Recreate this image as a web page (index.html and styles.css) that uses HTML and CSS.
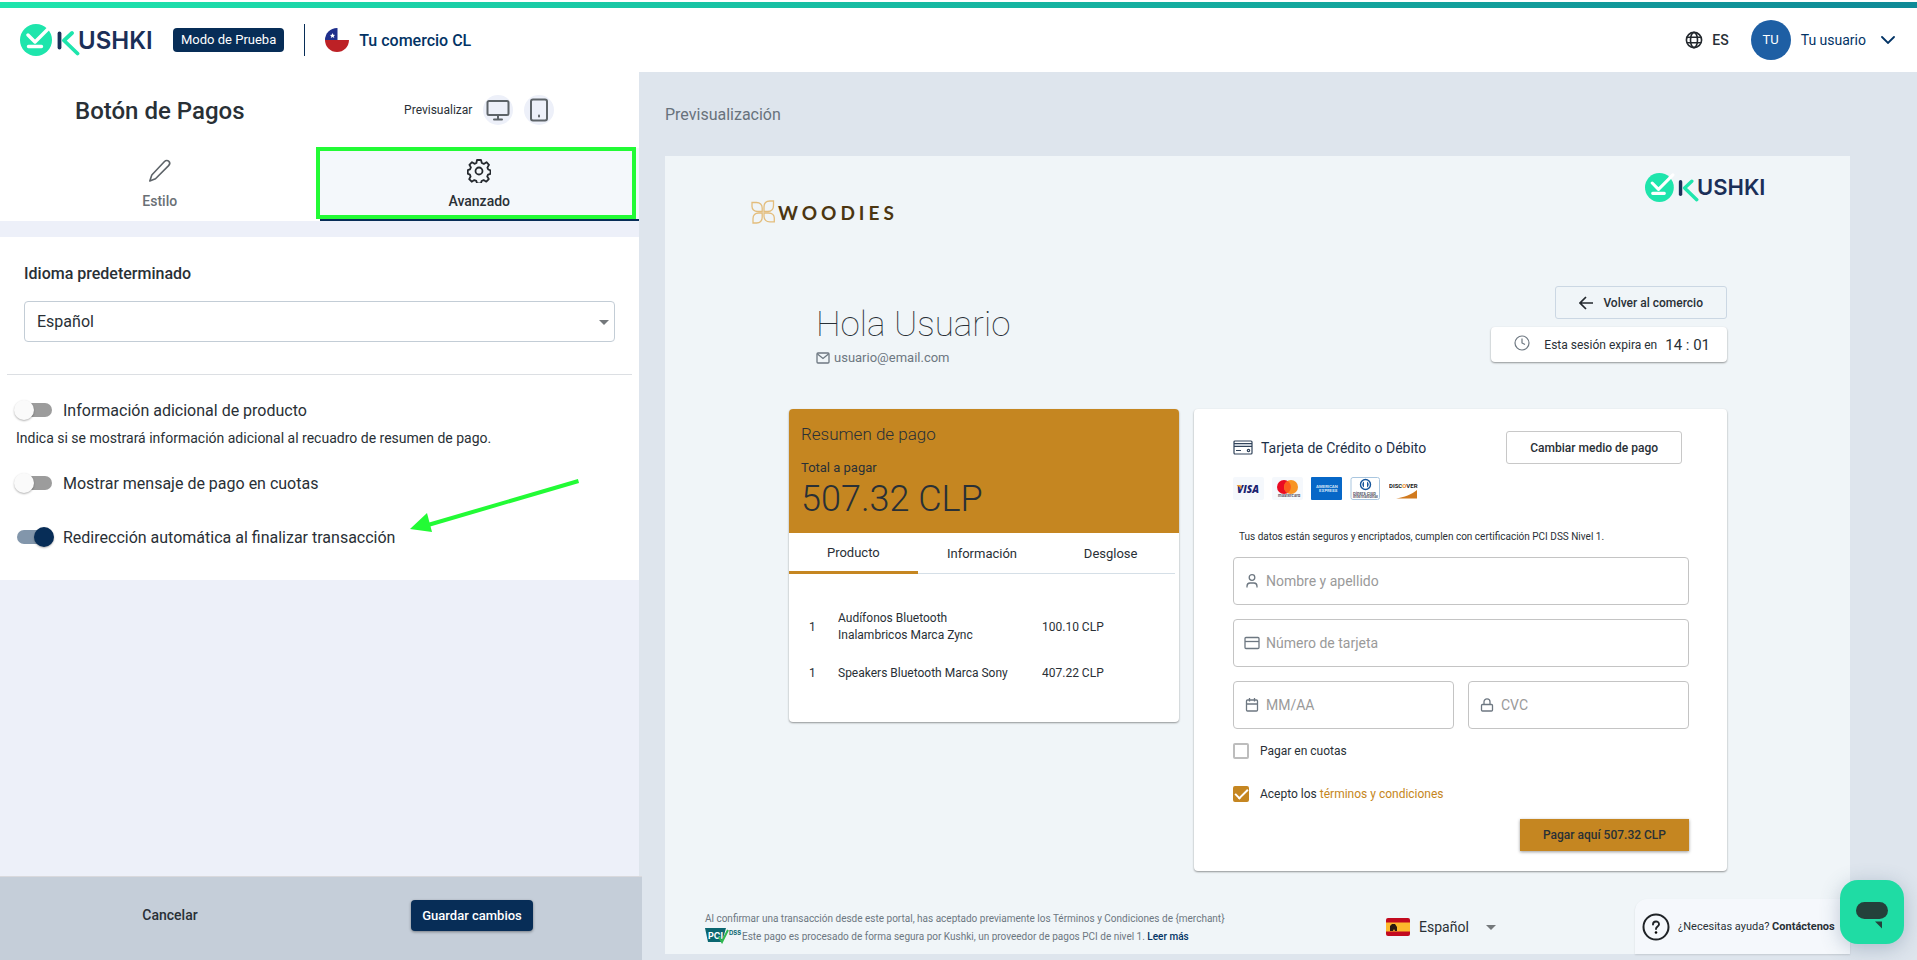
FILE: index.html
```html
<!DOCTYPE html>
<html lang="es">
<head>
<meta charset="utf-8">
<title>Botón de Pagos</title>
<link rel="stylesheet" href="styles.css">
</head>
<body>
<div class="app">
  <header class="topbar">
    <div class="brand">
      <div class="logo">
        <svg viewBox="0 0 60 32" aria-hidden="true"><circle cx="16" cy="16" r="16" fill="#1ee5ac"/><path d="M8 11l7 7L31 2M8.500 22.500h13" fill="none" stroke="#fff" stroke-width="3.400" stroke-linecap="round" stroke-linejoin="round"/><path d="M39.500 9.500v14" stroke="#1b2f58" stroke-width="3.800" stroke-linecap="round"/><path d="M52 9l-8 7.500 13.500 13" fill="none" stroke="#1ee5ac" stroke-width="3.800" stroke-linecap="round" stroke-linejoin="round"/></svg>
        <span>USHKI</span>
      </div>
      <span class="badge">Modo de Prueba</span>
      <span class="divider"></span>
      <svg class="flag-cl" viewBox="0 0 24 24" aria-hidden="true">
        <clipPath id="round"><circle cx="12" cy="12" r="12"/></clipPath>
        <g clip-path="url(#round)"><path fill="#fff" d="M0 0h24v24H0z"/><path fill="#bd2126" d="M0 12h24v12H0z"/><path fill="#1f2f8c" d="M0 0h12.500v12H0z"/><path fill="#fff" d="M7.500 5l.8 1.800 1.900.1-1.500 1.200.6 1.900-1.800-1-1.700 1 .5-1.900-1.500-1.200 2-.1z"/></g>
      </svg>
      <span class="merchant">Tu comercio CL</span>
    </div>
    <div class="account">
      <button class="lang" type="button">
        <svg viewBox="0 0 18 18" class="ic18" aria-hidden="true"><g fill="none" stroke="#23282d" stroke-width="1.600"><circle cx="9" cy="9" r="7.600"/><ellipse cx="9" cy="9" rx="3.500" ry="7.600"/><path d="M2 6.300h14M2 11.700h14"/></g></svg>
        ES
      </button>
      <button class="user" type="button">
        <span class="avatar">TU</span>
        Tu usuario
        <svg viewBox="0 0 14 8" class="chev" aria-hidden="true"><path d="M1 1l6 6 6-6" fill="none" stroke="#023365" stroke-width="1.800" stroke-linecap="round"/></svg>
      </button>
    </div>
  </header>

  <div class="body">
    <aside class="sidebar">
      <div class="side-head">
        <div class="side-title">
          <h1>Botón de Pagos</h1>
          <div class="devices">
            <span>Previsualizar</span>
            <button type="button" class="round" aria-label="Escritorio"><svg viewBox="0 0 24 24" class="ic24"><path d="M3 3h18a1.500 1.500 0 0 1 1.500 1.500v11A1.500 1.500 0 0 1 21 17H3a1.500 1.500 0 0 1-1.500-1.500v-11A1.500 1.500 0 0 1 3 3zM12 17v4M8 21.500h8"/></svg></button>
            <button type="button" class="round" aria-label="Tableta"><svg viewBox="0 0 24 24" class="ic24"><rect x="4" y="1.500" width="16" height="21" rx="2"/><path d="M12 17.500v1"/></svg></button>
          </div>
        </div>
        <nav class="tabs">
          <button type="button" class="tab">
            <svg viewBox="0 0 24 24" class="ic24 thin"><path d="M16.500 2.500c1.300-1.300 3.200-1.300 4.300-.2s1.100 3-.2 4.300L7.500 19.800 1.800 22l2-6z"/></svg>
            Estilo
          </button>
          <button type="button" class="tab active">
            <svg viewBox="0 0 24 24" class="ic24"><circle cx="12" cy="12" r="3.500"/><path d="M10 1h4l.8 3 2 .9 2.700-1.700 2.500 2.600-1.600 2.800.8 1.900 2.300.8v3.500l-2.500.8-.8 2 1.600 2.500-2.500 2.600-2.700-1.600-2 .9-.7 2.500h-3.800l-.8-2.600-2-.8-2.600 1.600-2.500-2.600 1.400-2.600-.7-1.900L.8 14.700v-3.500L3 10.400l.9-2-1.500-2.600L5 3.200l2.500 1.600 1.900-.8z"/></svg>
            Avanzado
          </button>
          <span class="highlight"></span>
        </nav>
      </div>
      <form class="settings">
        <div class="language">
          <label for="idioma">Idioma predeterminado</label>
          <div class="select-box">
            <select id="idioma"><option>Español</option></select>
            <span class="caret"></span>
          </div>
        </div>
        <div class="switches">
          <label class="switch-row"><input type="checkbox" class="switch"><span>Información adicional de producto</span></label>
          <p class="hint">Indica si se mostrará información adicional al recuadro de resumen de pago.</p>
          <label class="switch-row"><input type="checkbox" class="switch"><span>Mostrar mensaje de pago en cuotas</span></label>
          <label class="switch-row last"><input type="checkbox" class="switch" checked><span>Redirección automática al finalizar transacción</span></label>
          <svg class="arrow" viewBox="0 0 170 56" aria-hidden="true"><path d="M168.500 2L18 46" stroke="#22fb35" stroke-width="4"/><path d="M0 50l17-16 5 19z" fill="#22fb35"/></svg>
        </div>
      </form>
      <footer class="actions">
        <button type="button" class="cancel">Cancelar</button>
        <button type="button" class="save">Guardar cambios</button>
      </footer>
    </aside>

    <main class="preview">
      <h2>Previsualización</h2>
      <section class="page">
        <div class="page-brand">
          <div class="woodies">
            <svg viewBox="0 0 24 24" class="ic24" aria-hidden="true"><g fill="none" stroke="#e3bd7c" stroke-width="1.300"><path d="M1 2.500h4.500c3.500 0 5.700 2 5.700 5.500v3.500H6.700C3 11.500 1 9 1 6.500z"/><path d="M22.500 1h-3.500c-3.800 0-6 2-6 6v4.500h3.700c3.500 0 5.800-2 5.800-6z"/><path d="M2 23h3.500c3.500 0 5.700-2 5.700-5.700V13H7.700C4 13 2 15 2 18.700z"/><path d="M23.300 21.800h-4.500c-3.500 0-5.800-2-5.800-5.500V13h4.500c3.800 0 5.800 2.500 5.800 5z"/></g></svg>
            <span>WOODIES</span>
          </div>
          <div class="logo small">
            <svg viewBox="0 0 60 32" aria-hidden="true"><circle cx="16" cy="16" r="16" fill="#1ee5ac"/><path d="M8 11l7 7L31 2M8.500 22.500h13" fill="none" stroke="#fff" stroke-width="3.400" stroke-linecap="round" stroke-linejoin="round"/><path d="M39.500 9.500v14" stroke="#1b2f58" stroke-width="3.800" stroke-linecap="round"/><path d="M52 9l-8 7.500 13.500 13" fill="none" stroke="#1ee5ac" stroke-width="3.800" stroke-linecap="round" stroke-linejoin="round"/></svg>
            <span>USHKI</span>
          </div>
        </div>

        <div class="welcome">
          <div class="hello">
            <h3>Hola Usuario</h3>
            <p><svg viewBox="0 0 14 12" class="mail" aria-hidden="true"><g fill="none" stroke="#6d7781" stroke-width="1.300"><rect x="1" y="1" width="12" height="10" rx="1"/><path d="M1.500 2L7 6.500 12.500 2"/></g></svg>usuario@email.com</p>
          </div>
          <div class="session">
            <button type="button" class="back"><svg viewBox="0 0 14 14" class="ic14" aria-hidden="true"><path d="M14 7H1M7 1L1 7l6 6" fill="none" stroke="#23282d" stroke-width="1.700"/></svg>Volver al comercio</button>
            <div class="timer">
              <svg viewBox="0 0 16 16" class="ic16" aria-hidden="true"><g fill="none" stroke="#6d7781" stroke-width="1.200"><circle cx="8" cy="8" r="7"/><path d="M8 3.500V8l3 1.500"/></g></svg>
              <span>Esta sesión expira en</span><strong>14 : 01</strong>
            </div>
          </div>
        </div>

        <div class="cards">
          <section class="card summary">
            <div class="summary-head">
              <h4>Resumen de pago</h4>
              <p>Total a pagar</p>
              <strong>507.32 CLP</strong>
            </div>
            <nav class="summary-tabs">
              <button type="button" class="active">Producto</button>
              <button type="button">Información</button>
              <button type="button">Desglose</button>
            </nav>
            <table>
              <tr><td>1</td><td>Audífonos Bluetooth<br>Inalambricos Marca Zync</td><td>100.10 CLP</td></tr>
              <tr><td>1</td><td>Speakers Bluetooth Marca Sony</td><td>407.22 CLP</td></tr>
            </table>
          </section>

          <form class="card payment">
            <div class="method">
              <span class="method-name"><svg viewBox="0 0 20 16" class="cardic" aria-hidden="true"><path d="M1 4h18v2H1z" fill="#c5cdd6"/><g fill="none" stroke="#31435a" stroke-width="1.200"><rect x="1" y="1" width="18" height="13" rx="1"/><path d="M1 3.500h18M1 6.500h18M3 10.500h5"/><circle cx="15.500" cy="10.500" r="1.200"/></g></svg>Tarjeta de Crédito o Débito</span>
              <button type="button" class="change">Cambiar medio de pago</button>
            </div>
            <div class="networks">
              <svg viewBox="0 0 31 23" role="img" aria-label="Visa"><rect width="31" height="23" rx="2" fill="#f5f8fc"/><text x="4" y="16" class="visa">VISA</text><path d="M3.500 8h4l1.500 4z" fill="#f0a02c"/></svg>
              <svg viewBox="0 0 31 23" role="img" aria-label="Mastercard"><rect width="31" height="23" rx="2" fill="#f5f8fc"/><circle cx="12" cy="10" r="7" fill="#ea0a22"/><circle cx="19" cy="10" r="7" fill="#f79425"/><path d="M15.500 4a7 7 0 0 1 0 12 7 7 0 0 1 0-12z" fill="#fc5c1c"/><text x="6" y="20" class="tiny">mastercard</text></svg>
              <svg viewBox="0 0 31 23" role="img" aria-label="American Express"><rect width="31" height="23" rx="1" fill="#0667c7"/><text x="5" y="10.500" class="tiny white">AMERICAN</text><text x="8" y="15" class="tiny white">EXPRESS</text></svg>
              <svg viewBox="0 0 31 23" role="img" aria-label="Diners Club"><rect x="1" y=".5" width="28.500" height="22" rx="2" fill="#fff" stroke="#a9c6df"/><circle cx="15.500" cy="7.500" r="5" fill="#fff" stroke="#15559b" stroke-width="1.400"/><path d="M14 4.500a3.500 3.500 0 0 0 0 6zM17 4.500a3.500 3.500 0 0 1 0 6z" fill="#15559b"/><text x="3" y="17.500" class="tiny">Diners Club</text><text x="3" y="21" class="tiny">International</text></svg>
              <svg viewBox="0 0 31 23" role="img" aria-label="Discover"><text x="0" y="11" class="disc">DISC<tspan fill="#ef8a1e">O</tspan>VER</text><path d="M7 21.500C15 20.500 23 17 28 13v8.500z" fill="#d17a1e"/></svg>
            </div>
            <p class="secure">Tus datos están seguros y encriptados, cumplen con certificación PCI DSS Nivel 1.</p>
            <div class="fields">
              <label class="field wide"><svg viewBox="0 0 16 16" class="ic16"><circle cx="8" cy="4.500" r="2.800"/><path d="M3 14.500v-1.300C3 11 4.500 10 6 10h4c1.500 0 3 1 3 3.200v1.300"/></svg><input type="text" placeholder="Nombre y apellido" aria-label="Nombre y apellido"></label>
              <label class="field wide"><svg viewBox="0 0 16 16" class="ic16"><rect x="1" y="2.500" width="14" height="11" rx="1"/><path d="M1 6.500h14"/></svg><input type="text" placeholder="Número de tarjeta" aria-label="Número de tarjeta"></label>
              <label class="field"><svg viewBox="0 0 16 16" class="ic16"><rect x="2.500" y="3" width="11" height="11" rx="1"/><path d="M2.500 7h11M5.500 1v3.500M10.500 1v3.500"/></svg><input type="text" placeholder="MM/AA" aria-label="MM/AA"></label>
              <label class="field"><svg viewBox="0 0 16 16" class="ic16"><rect x="2.500" y="7.500" width="11" height="6.500" rx="1"/><path d="M5 7.500V4.800a3 3 0 0 1 6 0v2.700"/></svg><input type="text" placeholder="CVC" aria-label="CVC"></label>
            </div>
            <label class="check"><input type="checkbox"><span>Pagar en cuotas</span></label>
            <div class="check second"><input type="checkbox" id="terms" checked><label for="terms">Acepto los</label><a href="#">términos y condiciones</a></div>
            <button type="button" class="pay">Pagar aquí 507.32 CLP</button>
          </form>
        </div>

        <footer class="page-foot">
          <div class="legal">
            <p>Al confirmar una transacción desde este portal, has aceptado previamente los Términos y Condiciones de {merchant}</p>
            <p><svg viewBox="0 0 37 16" class="pci" role="img" aria-label="PCI DSS"><path d="M0 0h21l-4 14H3z" fill="#0b6670"/><text x="3" y="11" class="pci-text" fill="#fff">PCI</text><path d="M14 9l3 5 6-12" fill="none" stroke="#2fb84f" stroke-width="2"/><text x="24" y="7" class="dss-text" fill="#0b6670">DSS</text></svg>Este pago es procesado de forma segura por Kushki, un proveedor de pagos PCI de nivel 1. <a href="#">Leer más</a></p>
          </div>
          <div class="page-lang">
            <svg viewBox="0 0 24 18" class="flag-es" aria-hidden="true"><rect width="24" height="18" rx="2" fill="#c20a1f"/><path d="M0 4.500h24v9H0z" fill="#fdb92c"/><path d="M4 13V8l2-2h3l2 3v4H9l-1-2-1 2z" fill="#2b1a10"/></svg>
            <div class="select-box">
              <select aria-label="Idioma"><option>Español</option></select>
              <span class="caret"></span>
            </div>
          </div>
          <div class="help">
            <svg viewBox="0 0 28 28" class="q" aria-hidden="true"><circle cx="14" cy="14" r="12.500" fill="none" stroke="#1f2327" stroke-width="2"/><path d="M11 11.500c0-4 6-4 6-.3 0 2.300-3 2.300-3 4.800" fill="none" stroke="#1f2327" stroke-width="1.900" stroke-linecap="round"/><circle cx="14" cy="19.500" r="1.300"/></svg>
            <span>¿Necesitas ayuda? <b>Contáctenos</b></span>
          </div>
        </footer>
      </section>
    </main>
  </div>
  <button type="button" class="chat" aria-label="Chat"><svg viewBox="0 0 64 64"><rect x="16" y="22" width="32" height="17" rx="8.500" fill="#24413b"/><path d="M35 41.500h7v7z" fill="#24413b"/></svg></button>
</div>
</body>
</html>
```

FILE: styles.css
```css
* { box-sizing: border-box; }

body {
  margin: 0;
  font-family: Roboto, "Noto Sans", sans-serif;
  font-size: 14px;
  color: #293036;
  background: #dee5ed;
}

h1, h2, h3, h4, p { margin: 0; font-weight: 400; }
a { text-decoration: none; }
svg { display: block; flex: none; }
button, select, input { font: inherit; color: inherit; margin: 0; }
button { padding: 0; border: 0; background: none; cursor: pointer; }
.ic24 { width: 24px; height: 24px; }
.ic18 { width: 18px; height: 18px; }
.ic16 { width: 16px; height: 16px; }
.ic14 { width: 14px; height: 14px; }

.app { min-height: 100vh; display: flex; flex-direction: column; position: relative; }

/* Logo */
.logo { display: flex; align-items: center; width: 134px; height: 32px; }
.logo svg { width: 60px; height: 32px; }
.logo span {
  margin-left: -2px;
  font-family: Inter, sans-serif;
  font-size: 24px;
  font-weight: 600;
  color: #1b2f58;
}
.logo.small { width: 120px; height: 30px; }
.logo.small svg { width: 54px; height: 29px; }
.logo.small span { font-size: 22px; }

/* Top bar */
.topbar {
  display: flex;
  justify-content: space-between;
  align-items: center;
  height: 72px;
  padding: 8px 22px 0 20px;
  background: linear-gradient(90deg, #1ee5ac, #0f8a97) 0 2px / 100% 6px no-repeat, #fff;
}
.brand, .account, .lang, .user { display: flex; align-items: center; }
.badge {
  margin-left: 19px;
  padding: 0 8px;
  font-size: 13px;
  line-height: 24px;
  border-radius: 4px;
  color: #fff;
  background: #072d57;
}
.divider { width: 1px; height: 32px; margin: 0 20px; background: #072d57; }
.flag-cl { width: 24px; height: 24px; }
.merchant { margin-left: 10px; font-size: 16px; font-weight: 500; color: #023365; }
.account { gap: 22px; }
.lang { gap: 9px; font-weight: 500; }
.user { gap: 10px; color: #023365; }
.avatar {
  width: 40px;
  line-height: 40px;
  font-size: 13px;
  text-align: center;
  border-radius: 50%;
  color: #fff;
  background: #1e5fa4;
}
.chev { width: 14px; height: 8px; margin-left: 5px; }

.body { flex: 1; display: grid; grid-template-columns: 1fr 2fr; }

/* Sidebar */
.sidebar { display: flex; flex-direction: column; background: #edf0f9; }
.side-head { background: #fff; }
.side-title, .tabs, .actions { display: grid; grid-template-columns: 1fr 1fr; }
.side-title { height: 76px; align-items: center; justify-items: center; }
.side-title h1 { padding-top: 2px; font-size: 24px; font-weight: 500; }
.devices { display: flex; align-items: center; gap: 11px; font-size: 12px; }
.round {
  display: grid;
  place-items: center;
  width: 30px;
  height: 30px;
  border-radius: 50%;
  background: #edf0f9;
}
.round .ic24, .tab .ic24 { fill: none; stroke: #5d6368; stroke-width: 2; stroke-linejoin: round; stroke-linecap: round; }
.tabs { position: relative; }
.tab {
  display: flex;
  flex-direction: column;
  align-items: center;
  gap: 10px;
  height: 73px;
  padding-top: 11px;
  font-weight: 500;
  color: #6a7075;
}
.tab .ic24.thin { stroke-width: 1.6; }
.tab.active { color: #293036; background: #f4f8fb; border-bottom: 2px solid #072d57; }
.tab.active .ic24 { stroke: #23282d; stroke-width: 1.8; }
.highlight { position: absolute; top: -1px; bottom: 2px; left: 50%; right: 3px; margin-left: -4px; border: 4px solid #22fb35; }

.settings { margin-top: 16px; background: #fff; }
.language {
  display: flex;
  flex-direction: column;
  gap: 17px;
  margin: 0 7px;
  padding: 27px 17px 32px;
  border-bottom: 1px solid #dcdfe3;
}
.language label { font-size: 16px; font-weight: 500; line-height: 20px; }
.select-box { position: relative; }
.select-box select {
  appearance: none;
  width: 100%;
  border: 1px solid #c3cdd6;
  border-radius: 4px;
  background: transparent;
}
.language select { height: 41px; padding: 0 12px; font-size: 16px; }
.caret {
  position: absolute;
  top: 50%;
  right: 6px;
  margin-top: -2px;
  border: 5px solid transparent;
  border-top-color: #74787b;
  border-bottom: 0;
  pointer-events: none;
}

.switches { position: relative; padding: 23px 16px 31px; }
.switch-row { display: flex; align-items: center; gap: 11px; height: 24px; padding-left: 1px; font-size: 16px; }
.switch {
  appearance: none;
  display: flex;
  align-items: center;
  width: 35px;
  height: 14px;
  border-radius: 7px;
  background: #9c9c9c;
}
.switch::before {
  content: "";
  width: 20px;
  height: 20px;
  margin-left: -3px;
  border-radius: 50%;
  background: #fafafa;
  box-shadow: 0 1px 2px rgba(0, 0, 0, .3);
}
.switch:checked { background: #8296ab; justify-content: flex-end; }
.switch:checked::before { margin-right: -2px; background: #072d57; }
.hint { margin: 6px 0 23px; line-height: 20px; }
.last { margin-top: 30px; }
.arrow { position: absolute; left: 410px; top: 104px; width: 170px; height: 56px; }

.actions {
  align-items: center;
  justify-items: center;
  height: 84px;
  margin: auto -3px 0 0;
  padding: 0 19px 7px;
  border-top: 1px solid #d9d9dd;
  background: #c5ced9;
}
.cancel { font-weight: 500; padding: 8px; }
.save {
  height: 31px;
  padding: 0 11px;
  font-size: 13px;
  font-weight: 500;
  border-radius: 4px;
  color: #fff;
  background: #072d57;
  box-shadow: 0 1px 3px rgba(0, 0, 0, .4);
}

/* Preview */
.preview { display: flex; flex-direction: column; padding: 0 67px 6px 26px; }
.preview h2 { height: 84px; font-size: 16px; line-height: 86px; color: #68727c; }
.page { flex: 1; display: flex; flex-direction: column; background: #f0f5f8; }
.page-brand { display: flex; justify-content: space-between; padding: 16px 85px 0 86px; }
.woodies { display: flex; align-items: center; gap: 3px; margin-top: 28px; height: 24px; }
.woodies span { font: 700 19px Lato, sans-serif; letter-spacing: 4px; color: #4c3611; }
.welcome { display: flex; justify-content: space-between; padding: 62px 123px 0 151px; }
.hello { padding-top: 17px; }
.hello h3 { font-size: 35px; font-weight: 100; line-height: 44px; }
.hello p { display: flex; align-items: center; gap: 4px; margin-top: 1px; font-size: 13px; line-height: 20px; color: #6d7781; }
.mail { width: 14px; height: 12px; }
.session { display: flex; flex-direction: column; align-items: flex-end; gap: 8px; }
.back, .change {
  display: flex;
  align-items: center;
  gap: 10px;
  height: 33px;
  padding: 0 23px;
  font-size: 12px;
  font-weight: 500;
  border: 1px solid #cbd7e3;
  border-radius: 3px;
}
.card, .timer { background: #fff; border-radius: 4px; box-shadow: 0 1px 2px rgba(0, 0, 0, .4); }
.timer { display: flex; align-items: center; height: 35px; padding: 0 17px 0 23px; font-size: 12px; }
.timer svg { margin: 0 14px 4px 0; }
.timer strong { margin-left: 8px; font-size: 15px; font-weight: 400; }

.cards {
  display: grid;
  grid-template-columns: minmax(0, 390fr) minmax(0, 533fr);
  gap: 15px;
  align-items: start;
  margin-top: 41px;
  padding: 0 123px 0 124px;
}
.summary { min-height: 313px; overflow: hidden; }
.summary-head { height: 124px; padding: 14px 12px; background: #c58621; }
.summary-head h4 { font-size: 17px; font-weight: 300; line-height: 22px; }
.summary-head p { margin-top: 15px; font-size: 13px; line-height: 16px; }
.summary-head strong { display: block; font-size: 36px; font-weight: 300; line-height: 46px; }
.summary-tabs { display: grid; grid-template-columns: repeat(3, 1fr); margin-right: 4px; font-size: 13px; }
.summary-tabs button { height: 41px; border-bottom: 1px solid #d5dfe7; }
.summary-tabs .active { border-bottom: 3px solid #c58621; }
.summary table { width: 100%; margin-top: 28px; border-spacing: 0; font-size: 12px; line-height: 17px; }
.summary td { padding: 8px 0 13px; }
.summary td:first-child { width: 49px; padding-left: 20px; }
.summary td:last-child { width: 137px; }

.payment { display: flex; flex-direction: column; padding: 22px 38px 20px 39px; }
.method { display: flex; justify-content: space-between; align-items: center; padding-right: 7px; }
.method-name { display: flex; align-items: center; gap: 8px; color: #1c3049; }
.cardic { width: 20px; height: 16px; }
.change { border-color: #c8c8c8; }
.networks { display: flex; gap: 8px; margin-top: 13px; }
.networks svg { width: 31px; height: 23px; }
.visa { font: italic 900 10px "Open Sans", sans-serif; fill: #1b2370; }
.disc { font: 700 6px Roboto, sans-serif; fill: #222; }
.tiny { font: 700 4px Inter, sans-serif; fill: #556; }
.tiny.white { fill: #cfe2f6; }
.secure { margin: 29px 0 12px 6px; font-size: 10px; line-height: 16px; }
.fields { display: grid; grid-template-columns: repeat(2, minmax(0, 1fr)); gap: 14px; }
.field {
  display: flex;
  align-items: center;
  gap: 6px;
  height: 48px;
  padding: 0 10px;
  border: 1px solid #c4c4c4;
  border-radius: 4px;
}
.field.wide { grid-column: span 2; }
.field svg { fill: none; stroke: #6d7781; stroke-width: 1.3; }
.field input { flex: 1; min-width: 0; padding: 0; border: 0; outline: 0; background: none; font-size: 14px; }
.field input::placeholder { color: #9a9a9a; opacity: 1; }
.check { display: flex; align-items: center; margin-top: 13px; height: 18px; font-size: 12px; }
.check.second { margin-top: 25px; }
.check input {
  appearance: none;
  width: 16px;
  height: 16px;
  margin-right: 11px;
  border: 2px solid #bdbdbd;
  border-radius: 2px;
}
.check input:checked { display: grid; place-items: center; border-color: #c58621; background: #c58621; }
.check input:checked::before { content: ""; width: 11px; height: 5px; border: solid #fff; border-width: 0 0 2px 2px; transform: translateY(-2px) rotate(-45deg); }
.check a { margin-left: 3px; color: #c58621; }
.pay {
  align-self: flex-end;
  height: 32px;
  margin-top: 16px;
  padding: 0 23px;
  font-size: 12px;
  font-weight: 500;
  background: #c58621;
  box-shadow: 0 1px 3px rgba(0, 0, 0, .4);
}

.page-foot { display: flex; align-items: center; margin-top: auto; padding-left: 40px; height: 55px; }
.legal { width: 681px; padding-top: 2px; font-size: 10px; line-height: 18px; color: #6d7781; }
.legal p { display: flex; white-space: pre; }
.legal a { color: #023365; font-weight: 500; }
.pci { width: 37px; height: 16px; }
.pci-text { font: 700 9px Inter, sans-serif; }
.dss-text { font: 700 6px Inter, sans-serif; }
.page-lang { display: flex; align-items: center; gap: 9px; }
.flag-es { width: 24px; height: 18px; }
.page-lang .select-box { width: 83px; }
.page-lang select { border: 0; padding: 0; font-size: 14px; }
.help {
  display: flex;
  align-items: center;
  gap: 8px;
  width: 215px;
  height: 55px;
  margin-left: auto;
  padding-left: 7px;
  font-size: 11px;
  white-space: nowrap;
  border-radius: 12px 0 0 0;
  background: #f5f8fc;
  box-shadow: 0 1px 2px rgba(0, 0, 0, .12);
}
.q { width: 28px; height: 28px; }
.help b { font-weight: 700; }
.chat {
  position: absolute;
  right: 13px;
  bottom: 16px;
  width: 64px;
  height: 64px;
  border-radius: 18px;
  background: #1fdca4;
  box-shadow: 0 4px 20px rgba(60, 90, 120, .3);
}
```
